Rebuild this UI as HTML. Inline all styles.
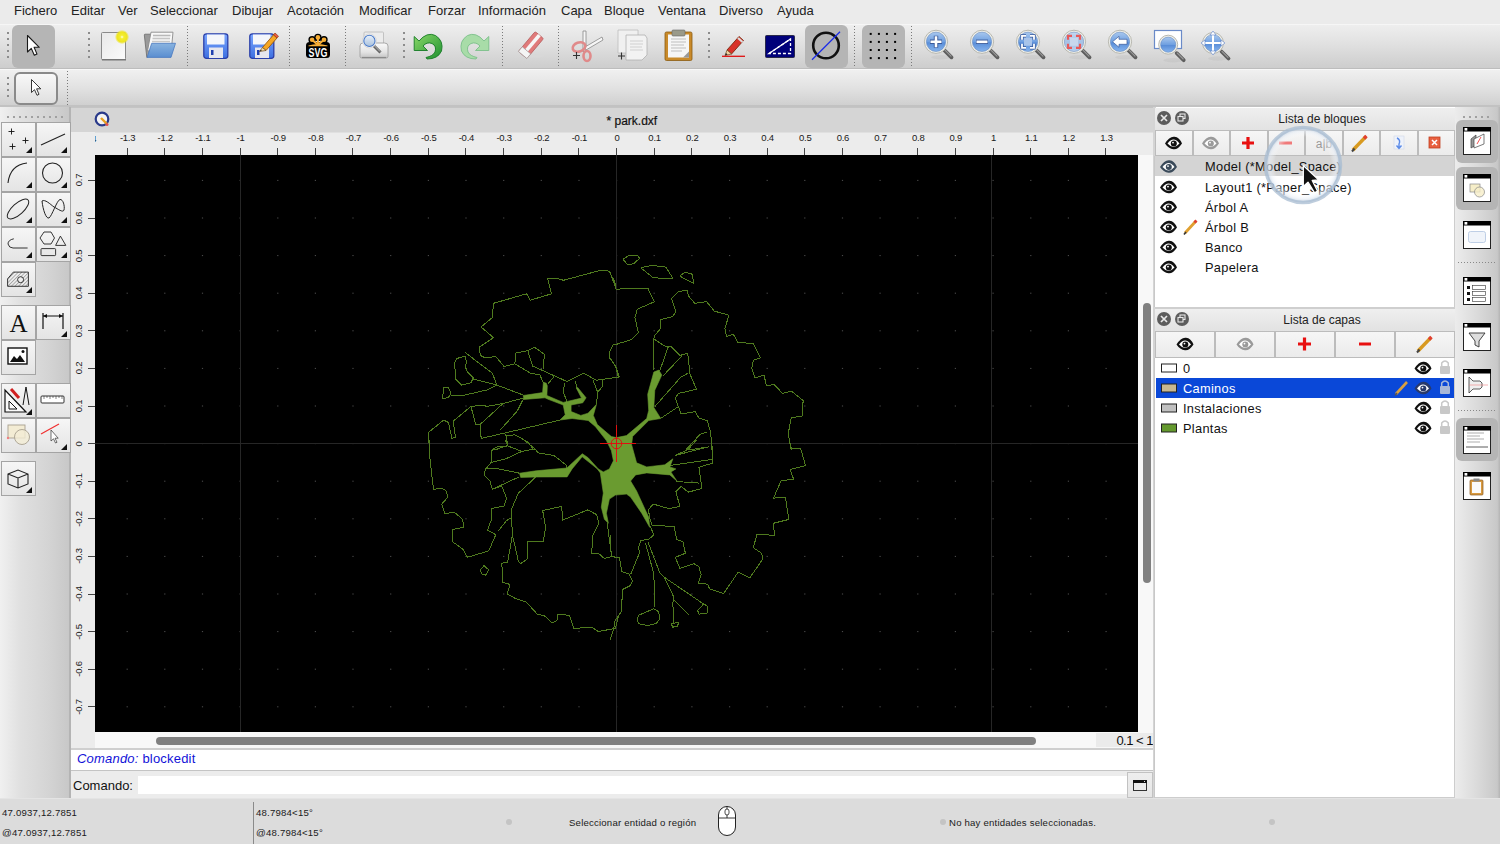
<!DOCTYPE html>
<html><head><meta charset="utf-8"><style>
*{box-sizing:border-box;margin:0;padding:0}
html,body{width:1500px;height:844px;overflow:hidden;background:#ececec;font-family:"Liberation Sans",sans-serif;color:#1a1a1a}
.a{position:absolute}
svg.i{position:absolute;overflow:visible}
.mb{position:absolute;top:3px;font-size:13px;color:#222;white-space:nowrap;line-height:16px}
.vsep{position:absolute;width:1px;background:repeating-linear-gradient(#7a7a7a 0 1px,transparent 1px 3px)}
.grip{position:absolute;width:2px;background:repeating-linear-gradient(#8c8c8c 0 2px,transparent 2px 6px)}
.hgrip{position:absolute;height:2px;background:repeating-linear-gradient(90deg,#a0a0a0 0 2px,transparent 2px 6px)}
.chk{position:absolute;background:#b5b5b5;border-radius:6px}
.lb{position:absolute;width:35px;height:35px;border:1px solid #a4a4a4;background:linear-gradient(#f6f6f6,#e4e4e4)}
.rl{position:absolute;font-size:9.5px;color:#1a1a1a;white-space:nowrap;line-height:10px;letter-spacing:-0.25px}
.st{position:absolute;font-size:9.6px;color:#1a1a1a;white-space:nowrap;line-height:12px;letter-spacing:0.2px}
.row{position:absolute;font-size:12.8px;color:#111;white-space:nowrap;line-height:16px;letter-spacing:0.3px}
.dbtn{position:absolute;background:linear-gradient(#f6f6f6,#ebebeb)}
</style></head><body>
<div class="a" style="left:0;top:0;width:1500px;height:24px;background:#ebebeb"></div>
<span class="mb" style="left:14px">Fichero</span>
<span class="mb" style="left:71px">Editar</span>
<span class="mb" style="left:118px">Ver</span>
<span class="mb" style="left:150px">Seleccionar</span>
<span class="mb" style="left:232px">Dibujar</span>
<span class="mb" style="left:287px">Acotación</span>
<span class="mb" style="left:359px">Modificar</span>
<span class="mb" style="left:428px">Forzar</span>
<span class="mb" style="left:478px">Información</span>
<span class="mb" style="left:561px">Capa</span>
<span class="mb" style="left:604px">Bloque</span>
<span class="mb" style="left:658px">Ventana</span>
<span class="mb" style="left:719px">Diverso</span>
<span class="mb" style="left:777px">Ayuda</span>
<div class="a" style="left:0;top:24px;width:1500px;height:45px;background:linear-gradient(#eeeeee,#e2e2e2 40%,#cdcdcd);border-top:1px solid #f6f6f6;border-bottom:1px solid #bdbdbd"></div>
<div class="a" style="left:0;top:69px;width:1500px;height:38px;background:linear-gradient(#f0f0f0,#e2e2e2 50%,#d0d0d0);border-top:1px solid #f8f8f8;border-bottom:2px solid #c2c2c2"></div>
<div class="grip" style="left:7px;top:32px;height:26px"></div>
<div class="chk" style="left:12px;top:25px;width:43px;height:43px"></div>
<svg class="i" style="left:27px;top:35px" width="14" height="22" viewBox="0 0 14 22"><path d="M0.5 0.5 L0.5 17 L4.3 13.4 L7.3 20.3 L10 19.1 L7.1 12.3 L12.3 12.3 Z" fill="#fff" stroke="#1a1a1a" stroke-width="1.1" stroke-linejoin="round"/></svg>
<div class="grip" style="left:88px;top:32px;height:26px"></div>
<svg class="i" style="left:100px;top:31px" width="28" height="31" viewBox="0 0 28 31"><defs><linearGradient id="ndg" x1="0" y1="0" x2="1" y2="1"><stop offset="0" stop-color="#e8e8e8"/><stop offset="1" stop-color="#fbfbfb"/></linearGradient><radialGradient id="glow"><stop offset="0" stop-color="#ffffe8"/><stop offset="0.25" stop-color="#f4ee30"/><stop offset="0.7" stop-color="#eee420"/><stop offset="1" stop-color="#eee420" stop-opacity="0"/></radialGradient></defs><rect x="1.5" y="1.5" width="24" height="27" rx="1" fill="url(#ndg)" stroke="#8a8a8a" stroke-width="1"/><rect x="2" y="28" width="24" height="1.5" fill="#777"/><circle cx="22" cy="6" r="7.2" fill="url(#glow)"/></svg>
<svg class="i" style="left:143px;top:31px" width="34" height="29" viewBox="0 0 34 29"><defs><linearGradient id="fbl" x1="0" y1="0" x2="0" y2="1"><stop offset="0" stop-color="#8ab4e0"/><stop offset="1" stop-color="#5a8ed0"/></linearGradient></defs><path d="M1.3 4 Q1.3 3.2 2 3.2 L8.5 3.2 L8.5 24 L3.8 26.4 Z" fill="#9a9a9a" stroke="#6a6a6a" stroke-width="0.8"/><path d="M8 1.2 L30 1.2 L28.5 17 L4.5 20 Z" fill="#f8f8f8" stroke="#8a8a8a" stroke-width="0.9"/><path d="M10 4.5 L27.5 4.5" stroke="#b8b8b8" stroke-width="1.6"/><path d="M9.5 7.5 L27 7.5" stroke="#c4c4c4" stroke-width="1.6"/><path d="M9 10.5 L27 10.5" stroke="#c8c8c8" stroke-width="1.4"/><path d="M8.7 12.3 L32.5 12.3 L28 26.4 L4.1 26.4 Z" fill="url(#fbl)" stroke="#4a7ac0" stroke-width="0.8"/></svg>
<div class="vsep" style="left:187px;top:26px;height:40px"></div>
<svg class="i" style="left:203px;top:33px" width="26" height="26" viewBox="0 0 26 26"><defs><linearGradient id="flg" x1="0" y1="0" x2="0" y2="1"><stop offset="0" stop-color="#7aa6ff"/><stop offset="1" stop-color="#3d6fe0"/></linearGradient></defs><rect x="0.8" y="0.8" width="24" height="24.5" rx="2.5" fill="url(#flg)" stroke="#2b3fa8" stroke-width="1.3"/><rect x="4" y="1.5" width="17.5" height="10" fill="#f4f6fb"/><rect x="6" y="14.5" width="14" height="10.5" fill="#e6e6ee"/><rect x="8" y="17" width="2.5" height="5" fill="#2040b0"/></svg>
<svg class="i" style="left:249px;top:33px" width="26" height="26" viewBox="0 0 26 26"><defs><linearGradient id="flg" x1="0" y1="0" x2="0" y2="1"><stop offset="0" stop-color="#7aa6ff"/><stop offset="1" stop-color="#3d6fe0"/></linearGradient></defs><rect x="0.8" y="0.8" width="24" height="24.5" rx="2.5" fill="url(#flg)" stroke="#2b3fa8" stroke-width="1.3"/><rect x="4" y="1.5" width="17.5" height="10" fill="#f4f6fb"/><rect x="6" y="14.5" width="14" height="10.5" fill="#e6e6ee"/><rect x="8" y="17" width="2.5" height="5" fill="#2040b0"/></svg>
<svg class="i" style="left:249px;top:30px" width="30" height="30" viewBox="0 0 30 30"><path d="M13.5 17.5 L24.5 4.8 L28 8 L17 20.5 Z" fill="#f5a623" stroke="#9a5a10" stroke-width="0.9"/><path d="M24.5 4.8 L26 3 L29.5 6.2 L28 8 Z" fill="#e85a40" stroke="#9a3a10" stroke-width="0.7"/><path d="M13.5 17.5 L10.5 21.5 L17 20.5 Z" fill="#f3d9a0" stroke="#6a4a20" stroke-width="0.7"/><path d="M10.5 21.5 L11.8 19.8 L12.8 20.8 Z" fill="#222"/></svg>
<div class="vsep" style="left:289px;top:26px;height:40px"></div>
<svg class="i" style="left:305px;top:33px" width="27" height="26" viewBox="0 0 27 26"><g fill="#000"><circle cx="7.1" cy="6.7" r="3.7"/><circle cx="12.9" cy="4.4" r="3.7"/><circle cx="19" cy="6.7" r="3.7"/><rect x="1" y="9" width="24" height="16" rx="3.5"/></g><g fill="#f7ae35"><circle cx="7.1" cy="6.7" r="2.3"/><circle cx="12.9" cy="4.4" r="2.3"/><circle cx="19" cy="6.7" r="2.3"/><path d="M3.5 12.6 Q12.9 9.5 22.5 12.6 L22.5 13.2 L3.5 13.2 Z"/></g><path d="M12.9 12 L7.1 6.7 M12.9 12 L12.9 4.4 M12.9 12 L19 6.7" stroke="#f7ae35" stroke-width="2"/><g transform="translate(13,24.2) scale(0.66,1)"><text x="0" y="0" font-family="Liberation Sans" font-weight="bold" font-size="13.5" fill="#fff" text-anchor="middle">SVG</text></g></svg>
<div class="vsep" style="left:345px;top:26px;height:40px"></div>
<svg class="i" style="left:359px;top:31px" width="30" height="30" viewBox="0 0 30 30"><defs><linearGradient id="ppg" x1="0" y1="0" x2="0" y2="1"><stop offset="0" stop-color="#fafafa"/><stop offset="0.6" stop-color="#e4e4e4"/><stop offset="1" stop-color="#c4c4c4"/></linearGradient><linearGradient id="plg" x1="0" y1="0" x2="0" y2="1"><stop offset="0" stop-color="#e8f0fa"/><stop offset="1" stop-color="#a8c0dc"/></linearGradient></defs><rect x="5" y="1" width="19.5" height="14" rx="1" fill="#ececec" stroke="#b8b8b8" stroke-width="0.8"/><path d="M1 15 Q1 12 4 12 L25.5 12 Q29 12 29 15 L29 25.5 Q29 27 27 27 L3 27 Q1 27 1 25.5 Z" fill="url(#ppg)" stroke="#a0a0a0" stroke-width="0.9"/><path d="M3 26.5 L27 26.5" stroke="#8a8a8a" stroke-width="1.2"/><path d="M14.5 14.5 L21.5 21.5" stroke="#666" stroke-width="3"/><path d="M14.8 14.2 L21.2 20.6" stroke="#bbb" stroke-width="1"/><circle cx="10.4" cy="9.9" r="7" fill="#fafafa" stroke="#c8c8c8" stroke-width="0.6"/><circle cx="10.4" cy="9.9" r="5.6" fill="url(#plg)" stroke="#4a7ac8" stroke-width="1.1"/></svg>
<div class="grip" style="left:403px;top:32px;height:26px"></div>
<svg class="i" style="left:413px;top:32px" width="32" height="28" viewBox="0 0 32 28"><defs><linearGradient id="ung" x1="0" y1="0" x2="1" y2="1"><stop offset="0" stop-color="#8ad868"/><stop offset="1" stop-color="#1e9030"/></linearGradient></defs><path d="M1.2 4.5 L1.2 18.5 L14.5 18.5 L10 14 Q14 9.5 19 11.5 Q24 14 22 20 Q20 24 13 25.5 L14 27 Q25 27 28.5 19 Q31 9 22.5 3.5 Q14 -0.5 6 9 Z" fill="url(#ung)" stroke="#157a25" stroke-width="0.9"/></svg>
<svg class="i" style="left:459px;top:32px" width="32" height="28" viewBox="0 0 32 28"><g transform="translate(31,0) scale(-1,1)"><path d="M1.2 4.5 L1.2 18.5 L14.5 18.5 L10 14 Q14 9.5 19 11.5 Q24 14 22 20 Q20 24 13 25.5 L14 27 Q25 27 28.5 19 Q31 9 22.5 3.5 Q14 -0.5 6 9 Z" fill="#a8dca8" stroke="#7cc08a" stroke-width="0.9"/></g></svg>
<div class="vsep" style="left:502px;top:26px;height:40px"></div>
<svg class="i" style="left:516px;top:32px" width="30" height="28" viewBox="0 0 30 28"><ellipse cx="16" cy="24" rx="12" ry="1.6" fill="#d8d8d8"/><g transform="translate(15,13) rotate(-50)"><rect x="-13" y="-5.5" width="26" height="11" rx="1.5" fill="#e07a7a" stroke="#b86060" stroke-width="0.8"/><rect x="-7" y="-1.8" width="20" height="3.6" fill="#f6f6f6"/><rect x="-13" y="-5.5" width="6" height="11" fill="#f4f4f4" stroke="#999" stroke-width="0.6"/></g></svg>
<div class="vsep" style="left:558px;top:26px;height:40px"></div>
<svg class="i" style="left:571px;top:30px" width="32" height="32" viewBox="0 0 32 32"><path d="M12 1 L15 1 L15 20 L12 22 Z" fill="#f6f6f6" stroke="#888" stroke-width="0.8"/><path d="M14 17 L31 7 L32 10 L15 20 Z" fill="#f6f6f6" stroke="#888" stroke-width="0.8"/><ellipse cx="8" cy="17" rx="6.5" ry="4.5" fill="none" stroke="#e08a8a" stroke-width="2.6" transform="rotate(-20 8 17)"/><ellipse cx="16" cy="26" rx="3.5" ry="5" fill="none" stroke="#e08a8a" stroke-width="2.6"/><path d="M2 25.5 L9 25.5 M5.5 22 L5.5 29" stroke="#333" stroke-width="1.1"/></svg>
<svg class="i" style="left:617px;top:29px" width="32" height="34" viewBox="0 0 32 34"><path d="M1 1 L21 1 L21 24 L1 24 Z" fill="#f0f0f0" stroke="#bcbcbc" stroke-width="0.8"/><path d="M9 6 L28 6 L30 9 L30 26 L25 31 L9 31 Z" fill="#f2f2f2" stroke="#b0b0b0" stroke-width="0.8"/><path d="M13 12 L26 12 M13 15 L26 15 M13 18 L25 18 M13 21 L26 21" stroke="#cfcfcf" stroke-width="1.2"/><path d="M1 27 L8 27 M4.5 23.5 L4.5 30.5" stroke="#333" stroke-width="1.1"/></svg>
<svg class="i" style="left:664px;top:29px" width="30" height="34" viewBox="0 0 30 34"><rect x="1" y="3" width="27" height="28.5" rx="1.5" fill="#c98a2a" stroke="#8a5a10" stroke-width="0.8"/><rect x="4" y="5.5" width="21" height="23" fill="#f6f6f6"/><rect x="8" y="1" width="13" height="6" rx="1" fill="#9a9a8a" stroke="#666" stroke-width="0.6"/><path d="M7 10 L22 10 M7 13 L22 13 M7 16 L20 16 M7 19 L22 19 M7 22 L18 22" stroke="#bdbdbd" stroke-width="1.1"/><path d="M19 28.5 L25 22.5 L25 28.5 Z" fill="#999"/></svg>
<div class="grip" style="left:708px;top:32px;height:26px"></div>
<svg class="i" style="left:722px;top:34px" width="25" height="25" viewBox="0 0 25 25"><path d="M5 16 L17 2.5 L21.5 6.5 L9.5 20 Z" fill="#d8332a" stroke="#7a2a10" stroke-width="0.9"/><path d="M16 4 L20.5 8" stroke="#ddd" stroke-width="2.2"/><path d="M5 16 L3 21.5 L9.5 20 Z" fill="#f0d0a0" stroke="#6a4a20" stroke-width="0.7"/><path d="M3 21.5 L4 19 L5.5 20.5 Z" fill="#222"/><path d="M0 22.3 L23 22.3" stroke="#e01010" stroke-width="1.3"/></svg>
<svg class="i" style="left:765px;top:35px" width="30" height="23" viewBox="0 0 30 23"><rect x="0.5" y="0.5" width="29" height="22" rx="1" fill="#00007a" stroke="#2a2a4a" stroke-width="1"/><path d="M4 18.5 L25.5 4 L25.5 18.5 Z" fill="none" stroke="#fff" stroke-width="1.3" stroke-dasharray="3 2"/><path d="M4 18.5 L25.5 4" stroke="#fff" stroke-width="1.3"/></svg>
<div class="chk" style="left:805px;top:25px;width:43px;height:43px"></div>
<svg class="i" style="left:810px;top:29px" width="34" height="34" viewBox="0 0 34 34"><circle cx="16" cy="16.5" r="12.8" fill="none" stroke="#111" stroke-width="2.6"/><path d="M2 30.8 L30 2.8" stroke="#1a2ae8" stroke-width="1.3"/></svg>
<div class="vsep" style="left:854px;top:26px;height:40px"></div>
<div class="chk" style="left:862px;top:25px;width:43px;height:43px"></div>
<svg class="i" style="left:0px;top:0px" width="1" height="1" viewBox="0 0 1 1"><rect x="869.7" y="32.9" width="2" height="2" fill="#000"/><rect x="869.7" y="40.9" width="2" height="2" fill="#000"/><rect x="869.7" y="49" width="2" height="2" fill="#000"/><rect x="869.7" y="57.1" width="2" height="2" fill="#000"/><rect x="877.9" y="32.9" width="2" height="2" fill="#000"/><rect x="877.9" y="40.9" width="2" height="2" fill="#000"/><rect x="877.9" y="49" width="2" height="2" fill="#000"/><rect x="877.9" y="57.1" width="2" height="2" fill="#000"/><rect x="885.9" y="32.9" width="2" height="2" fill="#000"/><rect x="885.9" y="40.9" width="2" height="2" fill="#000"/><rect x="885.9" y="49" width="2" height="2" fill="#000"/><rect x="885.9" y="57.1" width="2" height="2" fill="#000"/><rect x="894.1" y="32.9" width="2" height="2" fill="#000"/><rect x="894.1" y="40.9" width="2" height="2" fill="#000"/><rect x="894.1" y="49" width="2" height="2" fill="#000"/><rect x="894.1" y="57.1" width="2" height="2" fill="#000"/></svg>
<div class="vsep" style="left:911px;top:26px;height:40px"></div>
<svg class="i" style="left:0px;top:0px" width="1" height="1" viewBox="0 0 1 1"><defs><linearGradient id="zbl" x1="0" y1="0" x2="0" y2="1"><stop offset="0" stop-color="#a9c8ee"/><stop offset="0.5" stop-color="#6f9fe0"/><stop offset="0.55" stop-color="#5a8ed8"/><stop offset="1" stop-color="#86b4ee"/></linearGradient><linearGradient id="zbr" x1="0" y1="0" x2="0" y2="1"><stop offset="0" stop-color="#c4d8f0"/><stop offset="0.5" stop-color="#a6c2e6"/><stop offset="1" stop-color="#b8d0ee"/></linearGradient></defs><ellipse cx="941" cy="57.3" rx="10" ry="2.2" fill="#000" opacity="0.04"/><path d="M944.5 50.3 L951.5 57.3" stroke="#5e5e5e" stroke-width="3.8" stroke-linecap="round"/><path d="M945 50.099999999999994 L951 56.099999999999994" stroke="#9a9a9a" stroke-width="1.1" stroke-linecap="round"/><circle cx="936" cy="41.8" r="11.6" fill="#f0f0ea" stroke="#b8b8b0" stroke-width="1"/><circle cx="936" cy="41.8" r="9.7" fill="url(#zbl)" stroke="#5a80b8" stroke-width="0.5"/><path d="M930 41.8 L942 41.8 M936 35.8 L936 47.8" stroke="#3a5a9a" stroke-width="4.4"/><path d="M930.5 41.8 L941.5 41.8 M936 36.3 L936 47.3" stroke="#fff" stroke-width="2.6"/><ellipse cx="987" cy="57.3" rx="10" ry="2.2" fill="#000" opacity="0.04"/><path d="M990.5 50.3 L997.5 57.3" stroke="#5e5e5e" stroke-width="3.8" stroke-linecap="round"/><path d="M991 50.099999999999994 L997 56.099999999999994" stroke="#9a9a9a" stroke-width="1.1" stroke-linecap="round"/><circle cx="982" cy="41.8" r="11.6" fill="#f0f0ea" stroke="#b8b8b0" stroke-width="1"/><circle cx="982" cy="41.8" r="9.7" fill="url(#zbl)" stroke="#5a80b8" stroke-width="0.5"/><path d="M976 41.8 L988 41.8" stroke="#3a5a9a" stroke-width="4.4"/><path d="M976.5 41.8 L987.5 41.8" stroke="#fff" stroke-width="2.6"/><ellipse cx="1033" cy="57.3" rx="10" ry="2.2" fill="#000" opacity="0.04"/><path d="M1036.5 50.3 L1043.5 57.3" stroke="#5e5e5e" stroke-width="3.8" stroke-linecap="round"/><path d="M1037 50.099999999999994 L1043 56.099999999999994" stroke="#9a9a9a" stroke-width="1.1" stroke-linecap="round"/><circle cx="1028" cy="41.8" r="11.6" fill="#f0f0ea" stroke="#b8b8b0" stroke-width="1"/><circle cx="1028" cy="41.8" r="9.7" fill="url(#zbl)" stroke="#5a80b8" stroke-width="0.5"/><rect x="1024" y="37.8" width="8" height="8" fill="#a8c4ea"/><path d="M1022 39.8 L1022 35.8 L1026 35.8 M1030 35.8 L1034 35.8 L1034 39.8 M1034 43.8 L1034 47.8 L1030 47.8 M1026 47.8 L1022 47.8 L1022 43.8" fill="none" stroke="#3a5a9a" stroke-width="3.2"/><path d="M1022 39.8 L1022 35.8 L1026 35.8 M1030 35.8 L1034 35.8 L1034 39.8 M1034 43.8 L1034 47.8 L1030 47.8 M1026 47.8 L1022 47.8 L1022 43.8" fill="none" stroke="#fff" stroke-width="1.8"/><ellipse cx="1079" cy="57.3" rx="10" ry="2.2" fill="#000" opacity="0.04"/><path d="M1082.5 50.3 L1089.5 57.3" stroke="#5e5e5e" stroke-width="3.8" stroke-linecap="round"/><path d="M1083 50.099999999999994 L1089 56.099999999999994" stroke="#9a9a9a" stroke-width="1.1" stroke-linecap="round"/><circle cx="1074" cy="41.8" r="11.6" fill="#f0f0ea" stroke="#b8b8b0" stroke-width="1"/><circle cx="1074" cy="41.8" r="9.7" fill="url(#zbr)" stroke="#5a80b8" stroke-width="0.5"/><rect x="1070" y="37.8" width="8" height="8" fill="#c8d8ee"/><path d="M1068 39.8 L1068 35.8 L1072 35.8 M1076 35.8 L1080 35.8 L1080 39.8 M1080 43.8 L1080 47.8 L1076 47.8 M1072 47.8 L1068 47.8 L1068 43.8" fill="none" stroke="#e85a5a" stroke-width="2.2"/><ellipse cx="1125" cy="57.3" rx="10" ry="2.2" fill="#000" opacity="0.04"/><path d="M1128.5 50.3 L1135.5 57.3" stroke="#5e5e5e" stroke-width="3.8" stroke-linecap="round"/><path d="M1129 50.099999999999994 L1135 56.099999999999994" stroke="#9a9a9a" stroke-width="1.1" stroke-linecap="round"/><circle cx="1120" cy="41.8" r="11.6" fill="#f0f0ea" stroke="#b8b8b0" stroke-width="1"/><circle cx="1120" cy="41.8" r="9.7" fill="url(#zbl)" stroke="#5a80b8" stroke-width="0.5"/><path d="M1112.5 41.8 L1119 36.3 L1119 39.3 L1127 39.3 L1127 44.3 L1119 44.3 L1119 47.3 Z" fill="#fff" stroke="#3a5a9a" stroke-width="0.7"/><rect x="1154.5" y="30.5" width="27" height="18" fill="#fff" stroke="#6a8ac8" stroke-width="1.2"/><ellipse cx="1173.2" cy="60.2" rx="10" ry="2.2" fill="#000" opacity="0.04"/><path d="M1176.7 53.2 L1183.7 60.2" stroke="#5e5e5e" stroke-width="3.8" stroke-linecap="round"/><path d="M1177.2 53.0 L1183.2 59.0" stroke="#9a9a9a" stroke-width="1.1" stroke-linecap="round"/><circle cx="1168.2" cy="44.7" r="9.5" fill="#f0f0ea" stroke="#b8b8b0" stroke-width="1"/><circle cx="1168.2" cy="44.7" r="7.6" fill="url(#zbl)" stroke="#5a80b8" stroke-width="0.5"/><ellipse cx="1218" cy="58.5" rx="10" ry="2.2" fill="#000" opacity="0.04"/><path d="M1221.5 51.5 L1228.5 58.5" stroke="#5e5e5e" stroke-width="3.8" stroke-linecap="round"/><path d="M1222 51.3 L1228 57.3" stroke="#9a9a9a" stroke-width="1.1" stroke-linecap="round"/><circle cx="1213" cy="43" r="10.5" fill="#f0f0ea" stroke="#b8b8b0" stroke-width="1"/><circle cx="1213" cy="43" r="8.6" fill="url(#zbl)" stroke="#5a80b8" stroke-width="0.5"/><path d="M1213 33 L1213 53 M1203 43 L1223 43" stroke="#fff" stroke-width="2"/><path d="M1213 31 L1210 35 L1216 35 Z M1213 55 L1210 51 L1216 51 Z M1201 43 L1205 40 L1205 46 Z M1225 43 L1221 40 L1221 46 Z" fill="#fff" stroke="#5a80c8" stroke-width="0.6"/></svg>
<div class="grip" style="left:7px;top:77px;height:22px"></div>
<div class="a" style="left:14px;top:72px;width:44px;height:33px;border:2px solid #8a8a8a;border-radius:6px;background:linear-gradient(#f8f8f8,#e0e0e0)"></div>
<svg class="i" style="left:31px;top:79px" width="14" height="22" viewBox="0 0 14 22"><path d="M0.5 0.5 L0.5 13.5 L3.5 10.7 L6 16.3 L8 15.3 L5.6 9.8 L9.8 9.8 Z" fill="#fff" stroke="#222" stroke-width="0.9" stroke-linejoin="round"/></svg>
<div class="vsep" style="left:67px;top:71px;height:35px"></div>
<div class="a" style="left:0;top:107px;width:71px;height:691px;background:linear-gradient(90deg,#f0f0f0,#e0e0e0 30%,#d4d4d4 70%,#c8c8c8);border-right:2px solid #b4b4b4"></div>
<div class="hgrip" style="left:7px;top:116px;width:58px"></div>
<div class="lb" style="left:1px;top:122px"></div>
<div class="lb" style="left:36px;top:122px"></div>
<div class="lb" style="left:1px;top:157px"></div>
<div class="lb" style="left:36px;top:157px"></div>
<div class="lb" style="left:1px;top:192px"></div>
<div class="lb" style="left:36px;top:192px"></div>
<div class="lb" style="left:1px;top:227px"></div>
<div class="lb" style="left:36px;top:227px"></div>
<div class="lb" style="left:1px;top:262px"></div>
<div class="lb" style="left:1px;top:305px"></div>
<div class="lb" style="left:1px;top:340px"></div>
<div class="lb" style="left:36px;top:305px"></div>
<div class="lb" style="left:1px;top:383px"></div>
<div class="lb" style="left:36px;top:383px"></div>
<div class="lb" style="left:1px;top:418px"></div>
<div class="lb" style="left:36px;top:418px"></div>
<div class="lb" style="left:1px;top:461px"></div>
<svg class="i" style="left:0px;top:0px" width="1" height="1" viewBox="0 0 1 1"><path d="M32 153 L26 153 L32 147 Z" fill="#111"/><path d="M67 153 L61 153 L67 147 Z" fill="#111"/><path d="M32 188 L26 188 L32 182 Z" fill="#111"/><path d="M67 188 L61 188 L67 182 Z" fill="#111"/><path d="M32 223 L26 223 L32 217 Z" fill="#111"/><path d="M67 223 L61 223 L67 217 Z" fill="#111"/><path d="M32 258 L26 258 L32 252 Z" fill="#111"/><path d="M67 258 L61 258 L67 252 Z" fill="#111"/><path d="M32 293 L26 293 L32 287 Z" fill="#111"/><path d="M67 337 L61 337 L67 331 Z" fill="#111"/><path d="M32 415 L26 415 L32 409 Z" fill="#111"/><path d="M67 450 L61 450 L67 444 Z" fill="#111"/><path d="M32 493 L26 493 L32 487 Z" fill="#111"/><path d="M8.5 131.5 L14.5 131.5 M11.5 128.5 L11.5 134.5" stroke="#111" stroke-width="0.9"/><path d="M22.5 140.5 L28.5 140.5 M25.5 137.5 L25.5 143.5" stroke="#111" stroke-width="0.9"/><path d="M9.5 146.5 L15.5 146.5 M12.5 143.5 L12.5 149.5" stroke="#111" stroke-width="0.9"/><path d="M41 145 L65 134" stroke="#222" stroke-width="1.1"/><path d="M8 183 Q10 165 27 163" fill="none" stroke="#222" stroke-width="1.1"/><circle cx="52.5" cy="173" r="10" fill="none" stroke="#222" stroke-width="1.1"/><ellipse cx="18" cy="209" rx="13.5" ry="5.6" transform="rotate(-42 18 209)" fill="none" stroke="#222" stroke-width="1"/><path d="M42 201 C43 210 46 219 49 218 C52 216 57 200 60 199.5 C63 199 65 206 64 210 C63 213 58 209 54 207 C50 204 45 199 42 201 Z" fill="none" stroke="#222" stroke-width="1"/><path d="M13.8 238.8 Q8 240 8 244 Q9 248 13 248 L27.6 248" fill="none" stroke="#333" stroke-width="1"/><path d="M40 238 L44 232 L51 232 L54.5 238 L51 244 L44 244 Z" fill="none" stroke="#222" stroke-width="0.9"/><path d="M55.6 245.4 L60.4 236.1 L65.8 245.4 Z" fill="none" stroke="#222" stroke-width="0.9"/><rect x="41" y="248.6" width="14.6" height="7" rx="0.8" fill="none" stroke="#222" stroke-width="0.9"/><defs><pattern id="hat" width="2.5" height="2.5" patternUnits="userSpaceOnUse" patternTransform="rotate(45)"><path d="M0 0 L0 2.5" stroke="#555" stroke-width="0.8"/></pattern></defs><path d="M7.6 278.8 L13.3 272.1 L28.4 272.1 L28.4 286.3 L7.6 286.3 Z" fill="url(#hat)" stroke="#222" stroke-width="0.9"/><circle cx="20.6" cy="279.7" r="3" fill="#eee" stroke="#222" stroke-width="0.9"/><text x="18.5" y="332" font-family="Liberation Serif" font-size="25" fill="#111" text-anchor="middle">A</text><path d="M43 313 L43 329 M63 313 L63 329 M43 316 L63 316" stroke="#111" stroke-width="1.2"/><path d="M43 316 L47 314 L47 318 Z M63 316 L59 314 L59 318 Z" fill="#111"/><rect x="8" y="348" width="19" height="16" fill="#fff" stroke="#111" stroke-width="1.4"/><path d="M10 362 L14 356 L17 359 L20 355 L25 362 Z" fill="#111"/><circle cx="23" cy="351.5" r="1.5" fill="#111"/><path d="M5 390 L5 412 L26 412 Z" fill="#fafafa" stroke="#111" stroke-width="1.2"/><path d="M9 401 L9 409 L17 409 Z" fill="none" stroke="#111" stroke-width="1"/><path d="M11 389 L19 398" stroke="#d02020" stroke-width="3"/><path d="M26 387 L23 405 M26 387 L29 405" stroke="#111" stroke-width="1"/><rect x="41" y="396" width="23" height="7" rx="1" fill="#fff" stroke="#333" stroke-width="1"/><path d="M44 396 L44 399 M47 396 L47 398 M50 396 L50 399 M53 396 L53 398 M56 396 L56 399 M59 396 L59 398 M62 396 L62 399" stroke="#333" stroke-width="0.6"/><rect x="8" y="425" width="17" height="13" fill="#f3ecd4" stroke="#a8a090" stroke-width="0.9"/><circle cx="22" cy="437" r="7.5" fill="#f3ecd4" fill-opacity="0.8" stroke="#a8a090" stroke-width="0.9"/><circle cx="8" cy="438" r="1.2" fill="#f08080"/><path d="M41 434 L59 424" stroke="#f03030" stroke-width="1.2"/><path d="M51 430 L51 441 L53.5 438.8 L55.5 443 L57 442.3 L55 438.2 L58.2 438.2 Z" fill="#fff" stroke="#333" stroke-width="0.7"/><path d="M8 474 L18 470 L28 474 L28 484 L18 488 L8 484 Z M8 474 L18 478 L28 474 M18 478 L18 488" fill="none" stroke="#222" stroke-width="1.1"/></svg>
<div class="a" style="left:71px;top:107px;width:1083px;height:25px;background:#d5d5d5;border-top:1px solid #c4c4c4"></div>
<span class="a" style="left:606.5px;top:113.5px;font-size:12px;color:#111;white-space:nowrap;-webkit-text-stroke:0.2px #111">* park.dxf</span>
<svg class="i" style="left:94px;top:111px" width="16" height="16" viewBox="0 0 16 16"><circle cx="8" cy="8" r="6.3" fill="#f4f4f4" stroke="#2a3a8a" stroke-width="2.2"/><path d="M7 7 L13 13" stroke="#e8a020" stroke-width="2.4"/><circle cx="13" cy="13.5" r="1.5" fill="#e05050"/></svg>
<div class="a" style="left:71px;top:132px;width:1082px;height:23px;background:#ececec"></div>
<div class="a" style="left:71px;top:155px;width:24px;height:593px;background:#ececec"></div>
<span class="rl" style="left:97.6px;top:132.5px;width:60px;text-align:center">-1.3</span>
<span class="rl" style="left:135.2px;top:132.5px;width:60px;text-align:center">-1.2</span>
<span class="rl" style="left:172.9px;top:132.5px;width:60px;text-align:center">-1.1</span>
<span class="rl" style="left:210.5px;top:132.5px;width:60px;text-align:center">-1</span>
<span class="rl" style="left:248.2px;top:132.5px;width:60px;text-align:center">-0.9</span>
<span class="rl" style="left:285.8px;top:132.5px;width:60px;text-align:center">-0.8</span>
<span class="rl" style="left:323.4px;top:132.5px;width:60px;text-align:center">-0.7</span>
<span class="rl" style="left:361.1px;top:132.5px;width:60px;text-align:center">-0.6</span>
<span class="rl" style="left:398.8px;top:132.5px;width:60px;text-align:center">-0.5</span>
<span class="rl" style="left:436.4px;top:132.5px;width:60px;text-align:center">-0.4</span>
<span class="rl" style="left:474.1px;top:132.5px;width:60px;text-align:center">-0.3</span>
<span class="rl" style="left:511.7px;top:132.5px;width:60px;text-align:center">-0.2</span>
<span class="rl" style="left:549.4px;top:132.5px;width:60px;text-align:center">-0.1</span>
<span class="rl" style="left:587.0px;top:132.5px;width:60px;text-align:center">0</span>
<span class="rl" style="left:624.6px;top:132.5px;width:60px;text-align:center">0.1</span>
<span class="rl" style="left:662.3px;top:132.5px;width:60px;text-align:center">0.2</span>
<span class="rl" style="left:700.0px;top:132.5px;width:60px;text-align:center">0.3</span>
<span class="rl" style="left:737.6px;top:132.5px;width:60px;text-align:center">0.4</span>
<span class="rl" style="left:775.2px;top:132.5px;width:60px;text-align:center">0.5</span>
<span class="rl" style="left:812.9px;top:132.5px;width:60px;text-align:center">0.6</span>
<span class="rl" style="left:850.5px;top:132.5px;width:60px;text-align:center">0.7</span>
<span class="rl" style="left:888.2px;top:132.5px;width:60px;text-align:center">0.8</span>
<span class="rl" style="left:925.8px;top:132.5px;width:60px;text-align:center">0.9</span>
<span class="rl" style="left:963.5px;top:132.5px;width:60px;text-align:center">1</span>
<span class="rl" style="left:1001.2px;top:132.5px;width:60px;text-align:center">1.1</span>
<span class="rl" style="left:1038.8px;top:132.5px;width:60px;text-align:center">1.2</span>
<span class="rl" style="left:1076.5px;top:132.5px;width:60px;text-align:center">1.3</span>
<div class="a" style="left:95px;top:134px;width:3px;height:10px;overflow:hidden"><span class="rl" style="left:-14px;top:0">-1.4</span></div>
<span class="rl" style="left:48.5px;top:701.8px;width:60px;text-align:center;transform:rotate(-90deg)">-0.7</span>
<span class="rl" style="left:48.5px;top:664.2px;width:60px;text-align:center;transform:rotate(-90deg)">-0.6</span>
<span class="rl" style="left:48.5px;top:626.6px;width:60px;text-align:center;transform:rotate(-90deg)">-0.5</span>
<span class="rl" style="left:48.5px;top:589.0px;width:60px;text-align:center;transform:rotate(-90deg)">-0.4</span>
<span class="rl" style="left:48.5px;top:551.4px;width:60px;text-align:center;transform:rotate(-90deg)">-0.3</span>
<span class="rl" style="left:48.5px;top:513.8px;width:60px;text-align:center;transform:rotate(-90deg)">-0.2</span>
<span class="rl" style="left:48.5px;top:476.2px;width:60px;text-align:center;transform:rotate(-90deg)">-0.1</span>
<span class="rl" style="left:48.5px;top:438.6px;width:60px;text-align:center;transform:rotate(-90deg)">0</span>
<span class="rl" style="left:48.5px;top:401.0px;width:60px;text-align:center;transform:rotate(-90deg)">0.1</span>
<span class="rl" style="left:48.5px;top:363.4px;width:60px;text-align:center;transform:rotate(-90deg)">0.2</span>
<span class="rl" style="left:48.5px;top:325.8px;width:60px;text-align:center;transform:rotate(-90deg)">0.3</span>
<span class="rl" style="left:48.5px;top:288.2px;width:60px;text-align:center;transform:rotate(-90deg)">0.4</span>
<span class="rl" style="left:48.5px;top:250.6px;width:60px;text-align:center;transform:rotate(-90deg)">0.5</span>
<span class="rl" style="left:48.5px;top:213.0px;width:60px;text-align:center;transform:rotate(-90deg)">0.6</span>
<span class="rl" style="left:48.5px;top:175.4px;width:60px;text-align:center;transform:rotate(-90deg)">0.7</span>
<svg class="i" style="left:0px;top:0px" width="1" height="1" viewBox="0 0 1 1"><rect x="127" y="148" width="1" height="7" fill="#444"/><rect x="164" y="148" width="1" height="7" fill="#444"/><rect x="202" y="148" width="1" height="7" fill="#444"/><rect x="240" y="148" width="1" height="7" fill="#444"/><rect x="277" y="148" width="1" height="7" fill="#444"/><rect x="315" y="148" width="1" height="7" fill="#444"/><rect x="352" y="148" width="1" height="7" fill="#444"/><rect x="390" y="148" width="1" height="7" fill="#444"/><rect x="428" y="148" width="1" height="7" fill="#444"/><rect x="465" y="148" width="1" height="7" fill="#444"/><rect x="503" y="148" width="1" height="7" fill="#444"/><rect x="541" y="148" width="1" height="7" fill="#444"/><rect x="578" y="148" width="1" height="7" fill="#444"/><rect x="616" y="148" width="1" height="7" fill="#444"/><rect x="654" y="148" width="1" height="7" fill="#444"/><rect x="691" y="148" width="1" height="7" fill="#444"/><rect x="729" y="148" width="1" height="7" fill="#444"/><rect x="767" y="148" width="1" height="7" fill="#444"/><rect x="804" y="148" width="1" height="7" fill="#444"/><rect x="842" y="148" width="1" height="7" fill="#444"/><rect x="880" y="148" width="1" height="7" fill="#444"/><rect x="917" y="148" width="1" height="7" fill="#444"/><rect x="955" y="148" width="1" height="7" fill="#444"/><rect x="993" y="148" width="1" height="7" fill="#444"/><rect x="1030" y="148" width="1" height="7" fill="#444"/><rect x="1068" y="148" width="1" height="7" fill="#444"/><rect x="1105" y="148" width="1" height="7" fill="#444"/><rect x="88" y="706" width="7" height="1" fill="#444"/><rect x="88" y="669" width="7" height="1" fill="#444"/><rect x="88" y="631" width="7" height="1" fill="#444"/><rect x="88" y="594" width="7" height="1" fill="#444"/><rect x="88" y="556" width="7" height="1" fill="#444"/><rect x="88" y="518" width="7" height="1" fill="#444"/><rect x="88" y="481" width="7" height="1" fill="#444"/><rect x="88" y="443" width="7" height="1" fill="#444"/><rect x="88" y="406" width="7" height="1" fill="#444"/><rect x="88" y="368" width="7" height="1" fill="#444"/><rect x="88" y="330" width="7" height="1" fill="#444"/><rect x="88" y="293" width="7" height="1" fill="#444"/><rect x="88" y="255" width="7" height="1" fill="#444"/><rect x="88" y="218" width="7" height="1" fill="#444"/><rect x="88" y="180" width="7" height="1" fill="#444"/></svg>
<div class="a" style="left:95px;top:132px;width:1058px;height:1px;background:#e0e0e0"></div>
<svg class="i" style="left:0;top:0" width="1500" height="844" viewBox="0 0 1500 844"><rect x="95" y="155" width="1043" height="577" fill="#000"/><path d="M126.6 706.8h1.2M126.6 669.2h1.2M126.6 631.6h1.2M126.6 594.0h1.2M126.6 556.4h1.2M126.6 518.8h1.2M126.6 481.2h1.2M126.6 443.6h1.2M126.6 406.0h1.2M126.6 368.4h1.2M126.6 330.8h1.2M126.6 293.2h1.2M126.6 255.6h1.2M126.6 218.0h1.2M126.6 180.4h1.2M164.2 706.8h1.2M164.2 669.2h1.2M164.2 631.6h1.2M164.2 594.0h1.2M164.2 556.4h1.2M164.2 518.8h1.2M164.2 481.2h1.2M164.2 443.6h1.2M164.2 406.0h1.2M164.2 368.4h1.2M164.2 330.8h1.2M164.2 293.2h1.2M164.2 255.6h1.2M164.2 218.0h1.2M164.2 180.4h1.2M201.9 706.8h1.2M201.9 669.2h1.2M201.9 631.6h1.2M201.9 594.0h1.2M201.9 556.4h1.2M201.9 518.8h1.2M201.9 481.2h1.2M201.9 443.6h1.2M201.9 406.0h1.2M201.9 368.4h1.2M201.9 330.8h1.2M201.9 293.2h1.2M201.9 255.6h1.2M201.9 218.0h1.2M201.9 180.4h1.2M239.5 706.8h1.2M239.5 669.2h1.2M239.5 631.6h1.2M239.5 594.0h1.2M239.5 556.4h1.2M239.5 518.8h1.2M239.5 481.2h1.2M239.5 443.6h1.2M239.5 406.0h1.2M239.5 368.4h1.2M239.5 330.8h1.2M239.5 293.2h1.2M239.5 255.6h1.2M239.5 218.0h1.2M239.5 180.4h1.2M277.2 706.8h1.2M277.2 669.2h1.2M277.2 631.6h1.2M277.2 594.0h1.2M277.2 556.4h1.2M277.2 518.8h1.2M277.2 481.2h1.2M277.2 443.6h1.2M277.2 406.0h1.2M277.2 368.4h1.2M277.2 330.8h1.2M277.2 293.2h1.2M277.2 255.6h1.2M277.2 218.0h1.2M277.2 180.4h1.2M314.8 706.8h1.2M314.8 669.2h1.2M314.8 631.6h1.2M314.8 594.0h1.2M314.8 556.4h1.2M314.8 518.8h1.2M314.8 481.2h1.2M314.8 443.6h1.2M314.8 406.0h1.2M314.8 368.4h1.2M314.8 330.8h1.2M314.8 293.2h1.2M314.8 255.6h1.2M314.8 218.0h1.2M314.8 180.4h1.2M352.4 706.8h1.2M352.4 669.2h1.2M352.4 631.6h1.2M352.4 594.0h1.2M352.4 556.4h1.2M352.4 518.8h1.2M352.4 481.2h1.2M352.4 443.6h1.2M352.4 406.0h1.2M352.4 368.4h1.2M352.4 330.8h1.2M352.4 293.2h1.2M352.4 255.6h1.2M352.4 218.0h1.2M352.4 180.4h1.2M390.1 706.8h1.2M390.1 669.2h1.2M390.1 631.6h1.2M390.1 594.0h1.2M390.1 556.4h1.2M390.1 518.8h1.2M390.1 481.2h1.2M390.1 443.6h1.2M390.1 406.0h1.2M390.1 368.4h1.2M390.1 330.8h1.2M390.1 293.2h1.2M390.1 255.6h1.2M390.1 218.0h1.2M390.1 180.4h1.2M427.8 706.8h1.2M427.8 669.2h1.2M427.8 631.6h1.2M427.8 594.0h1.2M427.8 556.4h1.2M427.8 518.8h1.2M427.8 481.2h1.2M427.8 443.6h1.2M427.8 406.0h1.2M427.8 368.4h1.2M427.8 330.8h1.2M427.8 293.2h1.2M427.8 255.6h1.2M427.8 218.0h1.2M427.8 180.4h1.2M465.4 706.8h1.2M465.4 669.2h1.2M465.4 631.6h1.2M465.4 594.0h1.2M465.4 556.4h1.2M465.4 518.8h1.2M465.4 481.2h1.2M465.4 443.6h1.2M465.4 406.0h1.2M465.4 368.4h1.2M465.4 330.8h1.2M465.4 293.2h1.2M465.4 255.6h1.2M465.4 218.0h1.2M465.4 180.4h1.2M503.1 706.8h1.2M503.1 669.2h1.2M503.1 631.6h1.2M503.1 594.0h1.2M503.1 556.4h1.2M503.1 518.8h1.2M503.1 481.2h1.2M503.1 443.6h1.2M503.1 406.0h1.2M503.1 368.4h1.2M503.1 330.8h1.2M503.1 293.2h1.2M503.1 255.6h1.2M503.1 218.0h1.2M503.1 180.4h1.2M540.7 706.8h1.2M540.7 669.2h1.2M540.7 631.6h1.2M540.7 594.0h1.2M540.7 556.4h1.2M540.7 518.8h1.2M540.7 481.2h1.2M540.7 443.6h1.2M540.7 406.0h1.2M540.7 368.4h1.2M540.7 330.8h1.2M540.7 293.2h1.2M540.7 255.6h1.2M540.7 218.0h1.2M540.7 180.4h1.2M578.4 706.8h1.2M578.4 669.2h1.2M578.4 631.6h1.2M578.4 594.0h1.2M578.4 556.4h1.2M578.4 518.8h1.2M578.4 481.2h1.2M578.4 443.6h1.2M578.4 406.0h1.2M578.4 368.4h1.2M578.4 330.8h1.2M578.4 293.2h1.2M578.4 255.6h1.2M578.4 218.0h1.2M578.4 180.4h1.2M616.0 706.8h1.2M616.0 669.2h1.2M616.0 631.6h1.2M616.0 594.0h1.2M616.0 556.4h1.2M616.0 518.8h1.2M616.0 481.2h1.2M616.0 443.6h1.2M616.0 406.0h1.2M616.0 368.4h1.2M616.0 330.8h1.2M616.0 293.2h1.2M616.0 255.6h1.2M616.0 218.0h1.2M616.0 180.4h1.2M653.6 706.8h1.2M653.6 669.2h1.2M653.6 631.6h1.2M653.6 594.0h1.2M653.6 556.4h1.2M653.6 518.8h1.2M653.6 481.2h1.2M653.6 443.6h1.2M653.6 406.0h1.2M653.6 368.4h1.2M653.6 330.8h1.2M653.6 293.2h1.2M653.6 255.6h1.2M653.6 218.0h1.2M653.6 180.4h1.2M691.3 706.8h1.2M691.3 669.2h1.2M691.3 631.6h1.2M691.3 594.0h1.2M691.3 556.4h1.2M691.3 518.8h1.2M691.3 481.2h1.2M691.3 443.6h1.2M691.3 406.0h1.2M691.3 368.4h1.2M691.3 330.8h1.2M691.3 293.2h1.2M691.3 255.6h1.2M691.3 218.0h1.2M691.3 180.4h1.2M729.0 706.8h1.2M729.0 669.2h1.2M729.0 631.6h1.2M729.0 594.0h1.2M729.0 556.4h1.2M729.0 518.8h1.2M729.0 481.2h1.2M729.0 443.6h1.2M729.0 406.0h1.2M729.0 368.4h1.2M729.0 330.8h1.2M729.0 293.2h1.2M729.0 255.6h1.2M729.0 218.0h1.2M729.0 180.4h1.2M766.6 706.8h1.2M766.6 669.2h1.2M766.6 631.6h1.2M766.6 594.0h1.2M766.6 556.4h1.2M766.6 518.8h1.2M766.6 481.2h1.2M766.6 443.6h1.2M766.6 406.0h1.2M766.6 368.4h1.2M766.6 330.8h1.2M766.6 293.2h1.2M766.6 255.6h1.2M766.6 218.0h1.2M766.6 180.4h1.2M804.2 706.8h1.2M804.2 669.2h1.2M804.2 631.6h1.2M804.2 594.0h1.2M804.2 556.4h1.2M804.2 518.8h1.2M804.2 481.2h1.2M804.2 443.6h1.2M804.2 406.0h1.2M804.2 368.4h1.2M804.2 330.8h1.2M804.2 293.2h1.2M804.2 255.6h1.2M804.2 218.0h1.2M804.2 180.4h1.2M841.9 706.8h1.2M841.9 669.2h1.2M841.9 631.6h1.2M841.9 594.0h1.2M841.9 556.4h1.2M841.9 518.8h1.2M841.9 481.2h1.2M841.9 443.6h1.2M841.9 406.0h1.2M841.9 368.4h1.2M841.9 330.8h1.2M841.9 293.2h1.2M841.9 255.6h1.2M841.9 218.0h1.2M841.9 180.4h1.2M879.5 706.8h1.2M879.5 669.2h1.2M879.5 631.6h1.2M879.5 594.0h1.2M879.5 556.4h1.2M879.5 518.8h1.2M879.5 481.2h1.2M879.5 443.6h1.2M879.5 406.0h1.2M879.5 368.4h1.2M879.5 330.8h1.2M879.5 293.2h1.2M879.5 255.6h1.2M879.5 218.0h1.2M879.5 180.4h1.2M917.2 706.8h1.2M917.2 669.2h1.2M917.2 631.6h1.2M917.2 594.0h1.2M917.2 556.4h1.2M917.2 518.8h1.2M917.2 481.2h1.2M917.2 443.6h1.2M917.2 406.0h1.2M917.2 368.4h1.2M917.2 330.8h1.2M917.2 293.2h1.2M917.2 255.6h1.2M917.2 218.0h1.2M917.2 180.4h1.2M954.8 706.8h1.2M954.8 669.2h1.2M954.8 631.6h1.2M954.8 594.0h1.2M954.8 556.4h1.2M954.8 518.8h1.2M954.8 481.2h1.2M954.8 443.6h1.2M954.8 406.0h1.2M954.8 368.4h1.2M954.8 330.8h1.2M954.8 293.2h1.2M954.8 255.6h1.2M954.8 218.0h1.2M954.8 180.4h1.2M992.5 706.8h1.2M992.5 669.2h1.2M992.5 631.6h1.2M992.5 594.0h1.2M992.5 556.4h1.2M992.5 518.8h1.2M992.5 481.2h1.2M992.5 443.6h1.2M992.5 406.0h1.2M992.5 368.4h1.2M992.5 330.8h1.2M992.5 293.2h1.2M992.5 255.6h1.2M992.5 218.0h1.2M992.5 180.4h1.2M1030.2 706.8h1.2M1030.2 669.2h1.2M1030.2 631.6h1.2M1030.2 594.0h1.2M1030.2 556.4h1.2M1030.2 518.8h1.2M1030.2 481.2h1.2M1030.2 443.6h1.2M1030.2 406.0h1.2M1030.2 368.4h1.2M1030.2 330.8h1.2M1030.2 293.2h1.2M1030.2 255.6h1.2M1030.2 218.0h1.2M1030.2 180.4h1.2M1067.8 706.8h1.2M1067.8 669.2h1.2M1067.8 631.6h1.2M1067.8 594.0h1.2M1067.8 556.4h1.2M1067.8 518.8h1.2M1067.8 481.2h1.2M1067.8 443.6h1.2M1067.8 406.0h1.2M1067.8 368.4h1.2M1067.8 330.8h1.2M1067.8 293.2h1.2M1067.8 255.6h1.2M1067.8 218.0h1.2M1067.8 180.4h1.2M1105.5 706.8h1.2M1105.5 669.2h1.2M1105.5 631.6h1.2M1105.5 594.0h1.2M1105.5 556.4h1.2M1105.5 518.8h1.2M1105.5 481.2h1.2M1105.5 443.6h1.2M1105.5 406.0h1.2M1105.5 368.4h1.2M1105.5 330.8h1.2M1105.5 293.2h1.2M1105.5 255.6h1.2M1105.5 218.0h1.2M1105.5 180.4h1.2" stroke="#505050" stroke-width="1"/><path d="M240.5 155 L240.5 732 M616.5 155 L616.5 732 M991.5 155 L991.5 732 M95 443.5 L1138 443.5" stroke="#262626" stroke-width="1"/><g fill="none" stroke="#4f7a1e" stroke-width="1" stroke-linejoin="round" shape-rendering="crispEdges"><polyline points="616.2,289.1 609.6,271.3 601.3,270.1 563.4,280.3 556.3,278.0 547.5,278.4 551.5,293.8 530.2,300.2 526.6,293.8 493.5,303.3 492.3,317.5 481.1,327.0 493.5,337.7 479.2,347.2 480.4,355.5 485.2,357.8 495.8,356.6 504.1,366.6 514.8,363.7 516.0,353.1 527.8,350.7 534.5,347.2 544.4,354.3 543.2,368.5"/><polyline points="527.8,350.7 532.6,366.1 540.9,369.7 566.9,381.5 583.5,373.2 596.5,380.3 620.0,376.8"/><polyline points="514.8,363.7 531.4,373.7 539.7,374.4 543.2,382.7"/><polyline points="553.9,376.8 548.0,383.9"/><polyline points="564.5,382.7 563.4,392.2 566.9,401.7"/><polyline points="575.2,381.5 577.6,389.8"/><polyline points="593.0,380.3 597.7,392.2 596.5,404.0"/><polyline points="597.7,392.2 602.5,386.3 602.5,380.3"/><polyline points="620.0,343.6 613.1,344.8 609.6,351.9 609.6,357.8 615.5,366.1 617.9,375.6"/><polyline points="465.0,356.2 456.7,358.5 454.4,363.7 455.5,373.2 455.5,379.1 461.5,385.1 470.9,382.7 473.3,378.0 467.4,372.0 465.0,366.1 466.9,362.6 465.0,356.2"/><polyline points="465.0,352.4 492.3,373.2 497.0,385.1"/><polyline points="473.3,379.1 497.0,385.1 523.1,395.0"/><polyline points="443.7,387.0 448.4,387.0 450.8,393.4 448.4,397.4 442.5,398.8 443.7,387.0"/><polyline points="450.8,395.0 465.0,395.0 487.5,389.8 497.0,385.1"/><polyline points="523.1,398.1 502.9,403.6 486.4,406.4 483.5,405.2 470.9,406.4 453.2,421.1 455.5,437.2 452.0,438.4 448.4,422.5 443.7,420.1 428.3,432.5 429.5,450.0"/><polyline points="470.9,406.4 475.7,424.2 480.4,424.2 481.1,438.4 505.3,432.9 559.8,420.1"/><polyline points="480.4,424.2 502.9,403.6"/><polyline points="523.8,398.1 517.2,411.1 500.6,429.6"/><polyline points="505.8,434.4 507.7,445.5 494.6,450.0"/><polyline points="506.5,436.0 514.8,434.8 527.8,441.9 533.7,450.0"/><polyline points="623.0,259.5 629.0,255.2 637.3,255.2 639.6,258.3 633.7,263.7 627.8,264.7 623.0,259.5"/><polyline points="640.8,267.8 651.5,265.4 665.7,267.1 672.8,278.0 664.5,278.9 652.7,277.3 640.8,267.8"/><polyline points="679.9,276.1 684.6,272.5 691.8,273.7 694.1,283.2 690.6,282.0 679.9,276.1"/><polyline points="610.0,273.7 614.7,280.8 615.9,289.1 647.9,288.4 654.5,301.7 637.3,309.2 634.9,317.5 638.4,332.9 631.3,339.6 614.7,344.8 613.1,344.8"/><polyline points="610.0,357.8 615.9,366.6 619.0,376.8 610.0,378.4"/><polyline points="655.0,335.3 660.9,328.2 660.2,319.9 672.8,316.4 675.9,311.6 671.6,298.6 678.7,291.5 687.0,290.3 688.7,296.2 694.8,303.3 706.7,301.7 714.3,311.1 729.0,315.2 724.9,328.2 726.6,336.5 733.2,334.1 738.0,342.4 753.4,343.6 760.5,357.8 753.4,360.2 751.7,368.5 755.0,378.0 764.0,375.1 766.4,385.5 774.2,384.6 782.5,393.4 791.3,391.0 803.1,400.5 802.4,415.9 791.3,417.8 788.2,433.6 791.3,450.0"/><polyline points="655.0,335.3 653.8,338.9 664.5,346.0 670.4,346.0 679.9,355.5 687.7,353.1 690.1,374.4 696.5,389.3 678.7,393.4 675.2,398.1 681.1,414.0 695.3,411.6 698.9,418.2 707.2,420.6 710.7,432.5 711.9,450.0"/><polyline points="653.8,338.9 653.8,369.7"/><polyline points="668.1,347.2 659.8,370.9"/><polyline points="682.3,355.5 663.3,375.6"/><polyline points="688.2,373.2 681.1,376.8 655.0,406.4"/><polyline points="678.7,406.4 660.9,418.2"/><polyline points="707.2,432.0 700.0,434.4 685.8,450.0"/><polyline points="688.2,450.0 709.5,446.7"/><polyline points="429.0,440.0 429.5,454.2 431.8,475.5 433.7,489.8 440.1,487.9 445.6,490.2 448.0,496.9 441.8,504.0 444.9,513.5 454.4,512.3 462.7,519.4 463.8,527.2 452.7,529.6 452.7,541.9 462.7,549.0 467.4,557.3 488.7,550.9 495.8,534.8 487.5,530.0 491.1,520.6 491.1,508.7 504.1,505.9 506.5,498.1 501.8,486.2 492.3,489.3 489.9,480.8 484.5,475.5 485.2,469.6 491.1,462.5 491.1,451.4 495.8,447.1 507.7,445.9 505.3,440.0"/><polyline points="507.7,445.9 521.9,451.4 534.9,449.0 538.5,453.0 553.9,455.4 566.9,465.6 566.9,470.8"/><polyline points="491.1,462.5 505.3,459.0 521.9,451.4"/><polyline points="524.3,440.0 534.9,449.0"/><polyline points="485.2,468.4 495.8,468.4 519.5,473.2"/><polyline points="492.3,489.3 519.5,476.7"/><polyline points="536.1,476.7 518.3,493.3 511.2,509.9 512.4,534.8 518.3,560.9 520.7,563.7 527.8,558.5 527.8,541.9 543.2,541.9 545.6,527.7 542.7,510.6 561.7,506.4 562.7,520.1 587.8,509.9 596.5,514.6 598.9,522.9 592.5,536.0 591.8,553.3 598.9,553.7 604.4,558.5 611.9,556.6 620.0,558.0"/><polyline points="498.2,531.2 506.5,520.6 511.2,517.7"/><polyline points="512.4,534.8 507.7,562.0 501.8,563.2 502.9,582.2 510.0,584.5 507.2,594.0 516.0,598.8 526.6,602.3 537.3,614.2 544.4,615.8 552.2,622.9 557.0,620.6 557.9,614.2 569.3,615.4 574.0,628.4 591.8,627.2 598.2,631.5 615.5,628.4 618.6,615.4 620.0,614.2"/><polyline points="484.0,565.6 488.7,569.9 485.9,575.1 481.6,573.9 480.4,569.9 484.0,565.6"/><polyline points="607.2,522.9 611.5,555.6"/><polyline points="788.9,440.0 791.3,448.3 800.8,449.0 805.5,465.6 790.1,469.6 793.6,479.1 781.1,480.8 773.5,498.1 785.4,497.3 788.9,519.4 773.0,523.4 774.7,535.3 756.9,534.3 753.4,547.8 761.7,553.3 762.8,559.0 749.8,577.9 738.0,572.2 723.7,593.6 709.5,588.8 707.6,584.1 698.2,583.4 701.2,574.6 698.9,566.8 694.1,563.7 679.9,568.4 675.2,557.3 685.4,553.3 683.0,541.9 676.8,539.5 674.0,526.5 652.2,525.3 649.8,518.2 648.4,509.9 653.1,504.0 669.2,508.7 679.9,506.4 675.9,491.7 681.1,486.2 688.2,492.1 701.9,488.6 698.9,467.3 712.4,463.2 711.9,440.0"/><polyline points="676.4,481.5 698.9,483.1"/><polyline points="669.2,465.6 711.9,459.4"/><polyline points="675.2,455.4 709.5,446.6"/><polyline points="675.2,455.4 688.2,449.5 696.5,440.0"/><polyline points="650.3,526.5 653.8,534.8 649.1,539.1 640.8,540.7 638.4,547.8 639.6,552.6 630.9,573.9"/><polyline points="610.0,556.1 619.5,558.0 621.8,571.5 629.0,573.9 632.5,581.0 630.1,585.7 623.0,589.3 621.4,605.9 621.4,611.8 615.2,620.1 613.6,629.6 610.0,640.0"/><polyline points="645.5,543.1 653.8,573.9 655.0,607.1"/><polyline points="647.9,541.9 659.8,572.7 664.5,577.4 703.6,604.0 707.2,605.9 707.2,613.0 698.9,614.2 697.7,610.6 703.6,604.0"/><polyline points="664.5,577.4 674.0,597.6 672.8,603.5 674.0,622.5"/><polyline points="674.0,600.0 689.4,615.4"/><polyline points="638.4,615.4 653.8,608.7 658.6,611.8 659.8,618.9 656.2,623.6 647.9,625.5 638.4,623.6 637.3,618.9 638.4,615.4"/><polyline points="671.1,623.6 678.7,622.5 677.5,626.0 672.8,627.2 671.1,623.6"/><polyline points="610.0,534.8 611.2,553.7"/></g><polygon fill="#6a9b30" stroke="#6a9b30" stroke-width="0.6" points="523.1,395.5 542.6,392.6 543.4,382.2 546.3,383.2 547.3,385.8 546.9,395.5 563.2,402.4 581.5,398.1 576.3,388.0 577.6,387.4 586.1,397.8 582.8,402.8 571.1,405.0 571.1,411.5 580.8,415.4 588.0,413.2 596.5,404.3 593.3,415.4 597.3,424.5 611.4,436.6 616.5,437.6 626.5,435.6 646.7,418.5 648.7,410.4 647.7,394.3 653.8,372.1 658.8,370.1 661.8,375.1 654.8,390.2 653.8,407.4 660.8,418.5 648.7,420.5 632.6,436.6 631.6,444.7 636.6,462.8 646.7,466.9 664.8,464.8 672.9,458.8 669.9,466.9 675.9,468.9 670.9,471.9 676.9,481.0 669.9,474.9 646.7,472.9 635.6,474.9 630.6,481.0 636.6,491.0 648.7,517.3 649.7,527.3 641.7,513.2 630.6,497.1 626.5,494.1 615.4,495.1 609.4,499.1 606.4,513.2 608.4,523.3 604.4,519.3 601.3,507.2 603.3,493.1 600.3,472.9 597.3,468.9 592.3,464.8 582.2,456.8 572.1,468.9 567.1,476.9 536.1,477.0 520.7,477.4 519.5,473.2 536.1,470.8 566.9,468.0 582.3,453.7 588.2,457.8 598.3,468.9 603.3,471.9 609.4,468.9 613.4,460.8 611.4,450.7 606.4,440.6 595.3,426.5 588.2,420.5 572.1,418.5 560.0,420.0 565.2,414.8 563.2,405.0 547.6,399.1 545.0,397.8 524.1,399.4"/><path d="M600 443.5 L636 443.5 M616.5 425 L616.5 462" stroke="#e01010" stroke-width="1"/><circle cx="616.5" cy="443.5" r="5.3" fill="none" stroke="#e01010" stroke-width="1"/></svg>
<div class="a" style="left:1138px;top:155px;width:16px;height:577px;background:#f8f8f8"></div>
<div class="a" style="left:1143px;top:303px;width:8px;height:280px;background:#808080;border-radius:4px"></div>
<div class="a" style="left:95px;top:732px;width:1059px;height:16px;background:#f8f8f8"></div>
<div class="a" style="left:156px;top:737px;width:880px;height:8px;background:#808080;border-radius:4px"></div>
<div class="a" style="left:1096px;top:733px;width:58px;height:14px;background:#ebebeb"></div>
<span class="a" style="left:1093px;top:733px;width:60px;text-align:right;font-size:13px;line-height:16px;color:#111;white-space:nowrap;letter-spacing:-0.5px">0.1 &lt; 1</span>
<div class="a" style="left:71px;top:748px;width:1083px;height:23px;background:#fff;border-top:2px solid #cfcfcf;border-bottom:1px solid #c4c4c4"></div>
<span class="a" style="left:77px;top:750.5px;font-size:13px;line-height:16px;color:#1212d8;white-space:nowrap;letter-spacing:0.2px"><i>Comando:</i> blockedit</span>
<div class="a" style="left:71px;top:771px;width:1083px;height:27px;background:#ececec"></div>
<span class="a" style="left:73px;top:778px;font-size:13px;line-height:16px;color:#111;white-space:nowrap">Comando:</span>
<div class="a" style="left:138px;top:776px;width:989px;height:18px;background:#fff"></div>
<div class="a" style="left:1127px;top:772px;width:26px;height:26px;background:linear-gradient(#eeeeee,#e6e6e6);border:1px solid #c2c2c2"></div>
<svg class="i" style="left:1133px;top:780px" width="14" height="11" viewBox="0 0 14 11"><rect x="0.5" y="0.5" width="13" height="10" fill="#ececec" stroke="#333" stroke-width="1"/><rect x="0" y="0" width="14" height="3" fill="#111"/><rect x="11" y="1" width="1" height="1" fill="#ddd"/></svg>
<div class="a" style="left:1153px;top:107px;width:302px;height:691px;background:#fff;border-left:3px solid #d4d4d4"></div>
<div class="a" style="left:1155px;top:108px;width:300px;height:23px;background:linear-gradient(#efefef,#e2e2e2)"></div>
<span class="a" style="left:1222px;top:112px;width:200px;text-align:center;font-size:12px;line-height:15px;color:#222">Lista de bloques</span>
<div class="a" style="left:1155px;top:130px;width:300px;height:26px;background:#bcbcbc"></div>
<div class="dbtn" style="left:1156.0px;top:131px;width:35.5px;height:24px"></div>
<div class="dbtn" style="left:1193.5px;top:131px;width:35.5px;height:24px"></div>
<div class="dbtn" style="left:1231.0px;top:131px;width:35.5px;height:24px"></div>
<div class="dbtn" style="left:1268.5px;top:131px;width:35.5px;height:24px"></div>
<div class="dbtn" style="left:1306.0px;top:131px;width:35.5px;height:24px"></div>
<div class="dbtn" style="left:1343.5px;top:131px;width:35.5px;height:24px"></div>
<div class="dbtn" style="left:1381.0px;top:131px;width:35.5px;height:24px"></div>
<div class="dbtn" style="left:1418.5px;top:131px;width:35.0px;height:24px"></div>
<div class="a" style="left:1154px;top:156px;width:301px;height:151px;background:#fff;border-left:1px solid #c8c8c8;border-right:1px solid #cdcdcd"></div>
<div class="a" style="left:1155px;top:156px;width:299px;height:20px;background:#d4d4d4"></div>
<span class="row" style="left:1205px;top:159.0px">Model (*Model_Space)</span>
<span class="row" style="left:1205px;top:179.5px">Layout1 (*Paper_Space)</span>
<span class="row" style="left:1205px;top:199.5px">Árbol A</span>
<span class="row" style="left:1205px;top:219.5px">Árbol B</span>
<span class="row" style="left:1205px;top:239.5px">Banco</span>
<span class="row" style="left:1205px;top:259.5px">Papelera</span>
<div class="a" style="left:1155px;top:307px;width:300px;height:2px;background:#cfcfcf"></div>
<div class="a" style="left:1155px;top:309px;width:300px;height:22px;background:linear-gradient(#efefef,#e2e2e2)"></div>
<span class="a" style="left:1222px;top:313px;width:200px;text-align:center;font-size:12px;line-height:15px;color:#222">Lista de capas</span>
<div class="a" style="left:1155px;top:331px;width:300px;height:27px;background:#bcbcbc"></div>
<div class="dbtn" style="left:1156.0px;top:332px;width:57.5px;height:24.5px"></div>
<div class="dbtn" style="left:1215.5px;top:332px;width:58.0px;height:24.5px"></div>
<div class="dbtn" style="left:1275.5px;top:332px;width:58.0px;height:24.5px"></div>
<div class="dbtn" style="left:1335.5px;top:332px;width:58.0px;height:24.5px"></div>
<div class="dbtn" style="left:1395.5px;top:332px;width:58.0px;height:24.5px"></div>
<div class="a" style="left:1154px;top:358px;width:301px;height:440px;background:#fff;border-left:1px solid #c8c8c8;border-right:1px solid #cdcdcd;border-bottom:1px solid #cdcdcd"></div>
<div class="a" style="left:1156px;top:378px;width:298px;height:20px;background:#0a48d8"></div>
<span class="row" style="left:1183px;top:360.5px;">0</span>
<span class="row" style="left:1183px;top:380.5px;color:#fff">Caminos</span>
<span class="row" style="left:1183px;top:400.5px;">Instalaciones</span>
<span class="row" style="left:1183px;top:420.5px;">Plantas</span>
<svg class="i" style="left:0px;top:0px" width="1" height="1" viewBox="0 0 1 1"><circle cx="1164" cy="118" r="7" fill="#5c5c5c"/><path d="M1161 115 L1167 121 M1167 115 L1161 121" stroke="#e8e8e8" stroke-width="1.7"/><circle cx="1182" cy="118" r="7" fill="#5c5c5c"/><rect x="1180" y="114" width="5" height="4.5" fill="none" stroke="#e8e8e8" stroke-width="1.1"/><rect x="1178" y="116.5" width="5" height="4.5" fill="#5c5c5c" stroke="#e8e8e8" stroke-width="1.1"/><circle cx="1164" cy="319" r="7" fill="#5c5c5c"/><path d="M1161 316 L1167 322 M1167 316 L1161 322" stroke="#e8e8e8" stroke-width="1.7"/><circle cx="1182" cy="319" r="7" fill="#5c5c5c"/><rect x="1180" y="315" width="5" height="4.5" fill="none" stroke="#e8e8e8" stroke-width="1.1"/><rect x="1178" y="317.5" width="5" height="4.5" fill="#5c5c5c" stroke="#e8e8e8" stroke-width="1.1"/><path d="M1165.0 143.5 Q1169.5 136 1174.5 136.7 Q1179.5 137.2 1182.0 143.5 Q1177.5 150 1173.5 149.3 Q1168.5 148.8 1165.0 143.5 Z" fill="#111"/><path d="M1167.5 143.6 Q1173.5 135.5 1179.5 143.6 Q1173.5 150.5 1167.5 143.6 Z" fill="#fff"/><circle cx="1173.8" cy="143.6" r="3" fill="#111"/><circle cx="1173.0" cy="142.6" r="0.9" fill="#fff"/><path d="M1202.0 143.5 Q1206.5 136 1211.5 136.7 Q1216.5 137.2 1219.0 143.5 Q1214.5 150 1210.5 149.3 Q1205.5 148.8 1202.0 143.5 Z" fill="#9a9a9a"/><path d="M1204.5 143.6 Q1210.5 135.5 1216.5 143.6 Q1210.5 150.5 1204.5 143.6 Z" fill="#fff"/><circle cx="1210.8" cy="143.6" r="3" fill="#9a9a9a"/><circle cx="1210.0" cy="142.6" r="0.9" fill="#fff"/><path d="M1242 143 L1254 143 M1248 137 L1248 149" stroke="#e81010" stroke-width="3.2"/><path d="M1279 143 L1292 143" stroke="#f07a7a" stroke-width="3"/><text x="1324" y="148" font-family="Liberation Sans" font-size="12" fill="#9a9a9a" text-anchor="middle">a|b</text><path d="M1353 150 L1366 136.5" stroke="#d89a20" stroke-width="3.4"/><path d="M1364 138.5 L1366.5 136" stroke="#e04030" stroke-width="3.4"/><path d="M1352 151.5 L1354.5 148.5" stroke="#444" stroke-width="2"/><rect x="1394" y="136" width="10" height="13" fill="#eef2fa" stroke="#cfd8e8" stroke-width="0.6"/><path d="M1397 138 Q1401 140 1399 144 L1399 148 M1396.5 145.5 L1399 148.5 L1401.5 145.5" fill="none" stroke="#5a8ae8" stroke-width="1.4"/><rect x="1429" y="137" width="11" height="11" fill="#e86040" stroke="#c04020" stroke-width="0.8"/><path d="M1432 140 L1437 145 M1437 140 L1432 145" stroke="#fff" stroke-width="1.5"/><path d="M1160.0 167.0 Q1164.5 159.5 1169.5 160.2 Q1174.5 160.7 1177.0 167.0 Q1172.5 173.5 1168.5 172.8 Q1163.5 172.3 1160.0 167.0 Z" fill="#3a4a5a"/><path d="M1162.5 167.1 Q1168.5 159.0 1174.5 167.1 Q1168.5 174.0 1162.5 167.1 Z" fill="#fff"/><circle cx="1168.8" cy="167.1" r="3" fill="#3a4a5a"/><circle cx="1168.0" cy="166.1" r="0.9" fill="#fff"/><path d="M1160.0 187.5 Q1164.5 180 1169.5 180.7 Q1174.5 181.2 1177.0 187.5 Q1172.5 194 1168.5 193.3 Q1163.5 192.8 1160.0 187.5 Z" fill="#111"/><path d="M1162.5 187.6 Q1168.5 179.5 1174.5 187.6 Q1168.5 194.5 1162.5 187.6 Z" fill="#fff"/><circle cx="1168.8" cy="187.6" r="3" fill="#111"/><circle cx="1168.0" cy="186.6" r="0.9" fill="#fff"/><path d="M1160.0 207.5 Q1164.5 200 1169.5 200.7 Q1174.5 201.2 1177.0 207.5 Q1172.5 214 1168.5 213.3 Q1163.5 212.8 1160.0 207.5 Z" fill="#111"/><path d="M1162.5 207.6 Q1168.5 199.5 1174.5 207.6 Q1168.5 214.5 1162.5 207.6 Z" fill="#fff"/><circle cx="1168.8" cy="207.6" r="3" fill="#111"/><circle cx="1168.0" cy="206.6" r="0.9" fill="#fff"/><path d="M1160.0 227.5 Q1164.5 220 1169.5 220.7 Q1174.5 221.2 1177.0 227.5 Q1172.5 234 1168.5 233.3 Q1163.5 232.8 1160.0 227.5 Z" fill="#111"/><path d="M1162.5 227.6 Q1168.5 219.5 1174.5 227.6 Q1168.5 234.5 1162.5 227.6 Z" fill="#fff"/><circle cx="1168.8" cy="227.6" r="3" fill="#111"/><circle cx="1168.0" cy="226.6" r="0.9" fill="#fff"/><path d="M1160.0 247.5 Q1164.5 240 1169.5 240.7 Q1174.5 241.2 1177.0 247.5 Q1172.5 254 1168.5 253.3 Q1163.5 252.8 1160.0 247.5 Z" fill="#111"/><path d="M1162.5 247.6 Q1168.5 239.5 1174.5 247.6 Q1168.5 254.5 1162.5 247.6 Z" fill="#fff"/><circle cx="1168.8" cy="247.6" r="3" fill="#111"/><circle cx="1168.0" cy="246.6" r="0.9" fill="#fff"/><path d="M1160.0 267.5 Q1164.5 260 1169.5 260.7 Q1174.5 261.2 1177.0 267.5 Q1172.5 274 1168.5 273.3 Q1163.5 272.8 1160.0 267.5 Z" fill="#111"/><path d="M1162.5 267.6 Q1168.5 259.5 1174.5 267.6 Q1168.5 274.5 1162.5 267.6 Z" fill="#fff"/><circle cx="1168.8" cy="267.6" r="3" fill="#111"/><circle cx="1168.0" cy="266.6" r="0.9" fill="#fff"/><path d="M1185 233 L1196 221" stroke="#e0a030" stroke-width="2.8"/><path d="M1194.5 222.6 L1196.5 220.5" stroke="#e04030" stroke-width="2.8"/><path d="M1184 234.5 L1186 232" stroke="#333" stroke-width="1.6"/><defs><radialGradient id="cglow"><stop offset="0.75" stop-color="#fff" stop-opacity="0"/><stop offset="0.9" stop-color="#e8eef6" stop-opacity="0.6"/><stop offset="1" stop-color="#b8c8da" stop-opacity="0.8"/></radialGradient></defs><circle cx="1303" cy="165" r="37.5" fill="url(#cglow)" stroke="#a8bcd2" stroke-width="3.5" stroke-opacity="0.75"/><path d="M1303.3 165.6 L1303.3 186.4 L1308 182.2 L1314.6 192.9 L1317.6 191.1 L1312.2 180.5 L1318.8 179.9 Z" fill="#111" stroke="#fff" stroke-width="1.3" stroke-linejoin="round"/><path d="M1176.5 344.5 Q1181 337 1186 337.7 Q1191 338.2 1193.5 344.5 Q1189 351 1185 350.3 Q1180 349.8 1176.5 344.5 Z" fill="#111"/><path d="M1179 344.6 Q1185 336.5 1191 344.6 Q1185 351.5 1179 344.6 Z" fill="#fff"/><circle cx="1185.3" cy="344.6" r="3" fill="#111"/><circle cx="1184.5" cy="343.6" r="0.9" fill="#fff"/><path d="M1236.5 344.5 Q1241 337 1246 337.7 Q1251 338.2 1253.5 344.5 Q1249 351 1245 350.3 Q1240 349.8 1236.5 344.5 Z" fill="#9a9a9a"/><path d="M1239 344.6 Q1245 336.5 1251 344.6 Q1245 351.5 1239 344.6 Z" fill="#fff"/><circle cx="1245.3" cy="344.6" r="3" fill="#9a9a9a"/><circle cx="1244.5" cy="343.6" r="0.9" fill="#fff"/><path d="M1298 344 L1311 344 M1304.5 337.5 L1304.5 350.5" stroke="#e81010" stroke-width="3.2"/><path d="M1359 344 L1371 344" stroke="#e81010" stroke-width="3"/><path d="M1418 351 L1431 337.5" stroke="#d89a20" stroke-width="3.4"/><path d="M1429 339.5 L1431.5 337" stroke="#e04030" stroke-width="3.4"/><path d="M1417 352.5 L1419.5 349.5" stroke="#444" stroke-width="2"/><rect x="1161.5" y="364" width="15" height="8" fill="#fff" stroke="#222" stroke-width="1"/><path d="M1414.5 368.5 Q1419 361 1424 361.7 Q1429 362.2 1431.5 368.5 Q1427 375 1423 374.3 Q1418 373.8 1414.5 368.5 Z" fill="#111"/><path d="M1417 368.6 Q1423 360.5 1429 368.6 Q1423 375.5 1417 368.6 Z" fill="#fff"/><circle cx="1423.3" cy="368.6" r="3" fill="#111"/><circle cx="1422.5" cy="367.6" r="0.9" fill="#fff"/><rect x="1440" y="366" width="10" height="8" rx="1" fill="#c8c8c8"/><path d="M1441.7 366 L1441.7 363 Q1445 359 1448.3 363 L1448.3 366" fill="none" stroke="#c8c8c8" stroke-width="1.5"/><rect x="1161.5" y="384" width="15" height="8" fill="#c8b890" stroke="#222" stroke-width="1"/><path d="M1414.5 388.5 Q1419 381 1424 381.7 Q1429 382.2 1431.5 388.5 Q1427 395 1423 394.3 Q1418 393.8 1414.5 388.5 Z" fill="#2a3a6a"/><path d="M1417 388.6 Q1423 380.5 1429 388.6 Q1423 395.5 1417 388.6 Z" fill="#fff"/><circle cx="1423.3" cy="388.6" r="3" fill="#2a3a6a"/><circle cx="1422.5" cy="387.6" r="0.9" fill="#fff"/><rect x="1440" y="386" width="10" height="8" rx="1" fill="#a8b8d8"/><path d="M1441.7 386 L1441.7 383 Q1445 379 1448.3 383 L1448.3 386" fill="none" stroke="#a8b8d8" stroke-width="1.5"/><rect x="1161.5" y="404" width="15" height="8" fill="#c0c0c0" stroke="#222" stroke-width="1"/><path d="M1414.5 408.5 Q1419 401 1424 401.7 Q1429 402.2 1431.5 408.5 Q1427 415 1423 414.3 Q1418 413.8 1414.5 408.5 Z" fill="#111"/><path d="M1417 408.6 Q1423 400.5 1429 408.6 Q1423 415.5 1417 408.6 Z" fill="#fff"/><circle cx="1423.3" cy="408.6" r="3" fill="#111"/><circle cx="1422.5" cy="407.6" r="0.9" fill="#fff"/><rect x="1440" y="406" width="10" height="8" rx="1" fill="#c8c8c8"/><path d="M1441.7 406 L1441.7 403 Q1445 399 1448.3 403 L1448.3 406" fill="none" stroke="#c8c8c8" stroke-width="1.5"/><rect x="1161.5" y="424" width="15" height="8" fill="#64992e" stroke="#222" stroke-width="1"/><path d="M1414.5 428.5 Q1419 421 1424 421.7 Q1429 422.2 1431.5 428.5 Q1427 435 1423 434.3 Q1418 433.8 1414.5 428.5 Z" fill="#111"/><path d="M1417 428.6 Q1423 420.5 1429 428.6 Q1423 435.5 1417 428.6 Z" fill="#fff"/><circle cx="1423.3" cy="428.6" r="3" fill="#111"/><circle cx="1422.5" cy="427.6" r="0.9" fill="#fff"/><rect x="1440" y="426" width="10" height="8" rx="1" fill="#c8c8c8"/><path d="M1441.7 426 L1441.7 423 Q1445 419 1448.3 423 L1448.3 426" fill="none" stroke="#c8c8c8" stroke-width="1.5"/><path d="M1396 394 L1407 382" stroke="#d8a040" stroke-width="2.6"/><path d="M1395 395.5 L1397 393" stroke="#555" stroke-width="1.5"/></svg>
<div class="a" style="left:1455px;top:107px;width:45px;height:691px;background:linear-gradient(90deg,#ececec,#dadada 50%,#c8c8c8 94%,#b4b4b4)"></div>
<div class="hgrip" style="left:1463px;top:116px;width:28px"></div>
<div class="chk" style="left:1456px;top:120px;width:42px;height:43px"></div>
<div class="chk" style="left:1456px;top:167px;width:42px;height:43px"></div>
<div class="chk" style="left:1456px;top:418px;width:42px;height:43px"></div>
<div class="a" style="left:1458px;top:262px;width:38px;height:1px;background:repeating-linear-gradient(90deg,#888 0 1px,transparent 1px 3px)"></div>
<div class="a" style="left:1458px;top:410px;width:38px;height:1px;background:repeating-linear-gradient(90deg,#888 0 1px,transparent 1px 3px)"></div>
<svg class="i" style="left:0px;top:0px" width="1" height="1" viewBox="0 0 1 1"><rect x="1463.5" y="127.5" width="27" height="27" fill="#fff" stroke="#222" stroke-width="1"/><rect x="1463" y="127" width="28" height="4.5" fill="#000"/><rect x="1464.5" y="128" width="2.8" height="2.6" fill="#fff"/><rect x="1463.5" y="174.5" width="27" height="27" fill="#fff" stroke="#222" stroke-width="1"/><rect x="1463" y="174" width="28" height="4.5" fill="#000"/><rect x="1464.5" y="175" width="2.8" height="2.6" fill="#fff"/><rect x="1463.5" y="221.5" width="27" height="27" fill="#fff" stroke="#222" stroke-width="1"/><rect x="1463" y="221" width="28" height="4.5" fill="#000"/><rect x="1464.5" y="222" width="2.8" height="2.6" fill="#fff"/><rect x="1463.5" y="277.5" width="27" height="27" fill="#fff" stroke="#222" stroke-width="1"/><rect x="1463" y="277" width="28" height="4.5" fill="#000"/><rect x="1464.5" y="278" width="2.8" height="2.6" fill="#fff"/><rect x="1463.5" y="323.5" width="27" height="27" fill="#fff" stroke="#222" stroke-width="1"/><rect x="1463" y="323" width="28" height="4.5" fill="#000"/><rect x="1464.5" y="324" width="2.8" height="2.6" fill="#fff"/><rect x="1463.5" y="369.5" width="27" height="27" fill="#fff" stroke="#222" stroke-width="1"/><rect x="1463" y="369" width="28" height="4.5" fill="#000"/><rect x="1464.5" y="370" width="2.8" height="2.6" fill="#fff"/><rect x="1463.5" y="426.5" width="27" height="27" fill="#fff" stroke="#222" stroke-width="1"/><rect x="1463" y="426" width="28" height="4.5" fill="#000"/><rect x="1464.5" y="427" width="2.8" height="2.6" fill="#fff"/><rect x="1463.5" y="472.5" width="27" height="27" fill="#fff" stroke="#222" stroke-width="1"/><rect x="1463" y="472" width="28" height="4.5" fill="#000"/><rect x="1464.5" y="473" width="2.8" height="2.6" fill="#fff"/><path d="M1471 148 L1471 139 L1476 135 L1476 145 Z" fill="#999" stroke="#444" stroke-width="0.7"/><path d="M1474 148 L1474 139 L1484 134 L1484 144 Z" fill="#fff" stroke="#444" stroke-width="0.7"/><path d="M1477 144 L1481 137" stroke="#f04040" stroke-width="0.9"/><rect x="1470" y="184" width="10" height="8" fill="#f6eec8" stroke="#888" stroke-width="0.7"/><circle cx="1479.5" cy="192" r="5" fill="#f6eec8" fill-opacity="0.8" stroke="#888" stroke-width="0.7"/><rect x="1468.5" y="231.5" width="17" height="11" rx="2" fill="#f0f4fa" stroke="#b0c4e0" stroke-width="0.8"/><rect x="1467" y="286" width="3" height="3" fill="#111"/><rect x="1472.5" y="285.5" width="13" height="4" fill="#fff" stroke="#333" stroke-width="0.6"/><rect x="1467" y="292" width="3" height="3" fill="#111"/><rect x="1472.5" y="291.5" width="13" height="4" fill="#fff" stroke="#333" stroke-width="0.6"/><rect x="1467" y="298" width="3" height="3" fill="#111"/><rect x="1472.5" y="297.5" width="13" height="4" fill="#fff" stroke="#333" stroke-width="0.6"/><path d="M1469 333 L1485 333 L1479 341 L1479 347 L1475 345 L1475 341 Z" fill="#ddd" stroke="#333" stroke-width="0.9"/><path d="M1469 377 L1473 381 L1480 381 L1482 383 L1482 387 L1480 389 L1473 389 L1469 393 Z" fill="#eee" stroke="#333" stroke-width="0.8"/><path d="M1469 385 L1488 385" stroke="#f08080" stroke-width="0.6"/><path d="M1467 433 L1484 433" stroke="#777" stroke-width="0.6"/><path d="M1467 436 L1480 436" stroke="#777" stroke-width="0.6"/><path d="M1467 439 L1484 439" stroke="#777" stroke-width="0.6"/><path d="M1467 442 L1480 442" stroke="#777" stroke-width="0.6"/><path d="M1466 447 L1488 447" stroke="#333" stroke-width="0.8"/><rect x="1470" y="480" width="13" height="15" rx="1" fill="#d89a40" stroke="#8a5a20" stroke-width="0.7"/><rect x="1472" y="482" width="9" height="11" fill="#fafafa"/><rect x="1473.5" y="478.5" width="6" height="3" fill="#888"/></svg>
<div class="a" style="left:0;top:798px;width:1500px;height:46px;background:#dcdcdc;border-top:1px solid #e4e4e4"></div>
<span class="st" style="left:2px;top:807px">47.0937,12.7851</span>
<span class="st" style="left:2px;top:827px">@47.0937,12.7851</span>
<div class="a" style="left:253px;top:802px;width:1px;height:42px;background:#8a8a8a"></div>
<span class="st" style="left:256px;top:807px">48.7984&lt;15°</span>
<span class="st" style="left:256px;top:827px">@48.7984&lt;15°</span>
<span class="st" style="left:569px;top:817px">Seleccionar entidad o región</span>
<span class="st" style="left:949px;top:817px">No hay entidades seleccionadas.</span>
<svg class="i" style="left:0px;top:0px" width="1" height="1" viewBox="0 0 1 1"><circle cx="509" cy="822" r="3" fill="#c4c4c4"/><circle cx="943" cy="822" r="3" fill="#c4c4c4"/><circle cx="1272" cy="822" r="3" fill="#c4c4c4"/><rect x="718.5" y="806.5" width="17" height="29" rx="8.5" fill="#fff" stroke="#222" stroke-width="1"/><path d="M718.5 818 L735.5 818 M727 806.5 L727 818" stroke="#222" stroke-width="0.9"/><rect x="725" y="809" width="4" height="6" rx="2" fill="#fff" stroke="#222" stroke-width="0.8"/></svg>
</body></html>
